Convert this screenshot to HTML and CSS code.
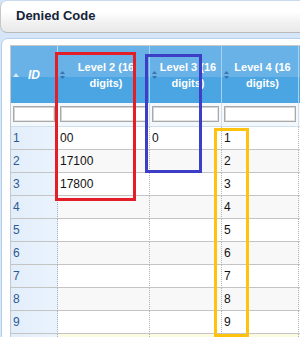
FILE: index.html
```html
<!DOCTYPE html>
<html>
<head>
<meta charset="utf-8">
<link rel="stylesheet" href="styles.css">
</head>
<body>
<div class="page">
  <div class="title-panel"><span class="title">Denied Code</span></div>
  <div class="grid-panel">
    <div class="grid">
      <div class="row head">
        <div class="cell hid"><svg class="asc" width="6" height="4" viewBox="0 0 6 4"><path d="M0 4 L3 0 L6 4 Z" fill="#d4e9f9"/></svg><span class="htext id-label">ID</span></div>
        <div class="cell h"><svg class="sort" width="5" height="8" viewBox="0 0 5 8"><path d="M0 3 L2.5 0 L5 3 Z M0 5 L2.5 8 L5 5 Z" fill="#3b72ad"/></svg><span class="htext">Level 2 (16 digits)</span></div>
        <div class="cell h"><svg class="sort" width="5" height="8" viewBox="0 0 5 8"><path d="M0 3 L2.5 0 L5 3 Z M0 5 L2.5 8 L5 5 Z" fill="#3b72ad"/></svg><span class="htext">Level 3 (16 digits)</span></div>
        <div class="cell h"><svg class="sort" width="5" height="8" viewBox="0 0 5 8"><path d="M0 3 L2.5 0 L5 3 Z M0 5 L2.5 8 L5 5 Z" fill="#3b72ad"/></svg><span class="htext">Level 4 (16 digits)</span></div>
        <div class="cell h"></div>
      </div>
      <div class="row filter">
        <div class="cell"><span class="inp"></span></div>
        <div class="cell"><span class="inp"></span></div>
        <div class="cell"><span class="inp"></span></div>
        <div class="cell"><span class="inp"></span></div>
        <div class="cell"><span class="inp"></span></div>
      </div>
      <div class="row data"><div class="cell idc">1</div><div class="cell">00</div><div class="cell">0</div><div class="cell">1</div><div class="cell"></div></div>
      <div class="row data alt"><div class="cell idc">2</div><div class="cell">17100</div><div class="cell"></div><div class="cell">2</div><div class="cell"></div></div>
      <div class="row data"><div class="cell idc">3</div><div class="cell">17800</div><div class="cell"></div><div class="cell">3</div><div class="cell"></div></div>
      <div class="row data alt"><div class="cell idc">4</div><div class="cell"></div><div class="cell"></div><div class="cell">4</div><div class="cell"></div></div>
      <div class="row data"><div class="cell idc">5</div><div class="cell"></div><div class="cell"></div><div class="cell">5</div><div class="cell"></div></div>
      <div class="row data alt"><div class="cell idc">6</div><div class="cell"></div><div class="cell"></div><div class="cell">6</div><div class="cell"></div></div>
      <div class="row data"><div class="cell idc">7</div><div class="cell"></div><div class="cell"></div><div class="cell">7</div><div class="cell"></div></div>
      <div class="row data alt"><div class="cell idc">8</div><div class="cell"></div><div class="cell"></div><div class="cell">8</div><div class="cell"></div></div>
      <div class="row data"><div class="cell idc">9</div><div class="cell"></div><div class="cell"></div><div class="cell">9</div><div class="cell"></div></div>
      <div class="row data sel"><div class="cell idc"></div><div class="cell"></div><div class="cell"></div><div class="cell"></div><div class="cell"></div></div>
    </div>
  </div>
  <div class="mark mark-red"></div>
  <div class="mark mark-blue"></div>
  <div class="mark mark-yellow"></div>
</div>
</body>
</html>
```
FILE: styles.css
```css
* { box-sizing: border-box; }
html, body {
  margin: 0;
  padding: 0;
  width: 300px;
  height: 337px;
  overflow: hidden;
  background: #d6e6f8;
  font-family: "Liberation Sans", Arial, sans-serif;
}
.page {
  position: relative;
  width: 300px;
  height: 337px;
  overflow: hidden;
}
.title-panel {
  width: 320px;
  height: 33px;
  border: 1px solid #c4c8cd;
  border-top-color: #c9daee;
  border-bottom-color: #b9b9b9;
  border-radius: 7px;
  background: linear-gradient(#ffffff 0%, #ffffff 35%, #f1f1f1 70%, #e9e9e9 100%);
  padding-left: 15px;
  display: flex;
  align-items: center;
}
.title {
  font-weight: bold;
  font-size: 13px;
  color: #14243a;
  position: relative;
  top: -1px;
}
.grid-panel {
  margin-top: 5px;
  margin-left: 1px;
  width: 330px;
  height: 320px;
  background: #fff;
  border: 1px solid #b5d0ec;
  border-radius: 7px;
  padding: 6px 0 0 8px;
}
.grid {
  border-top: 1px solid #c8c8c8;
  border-left: 1px solid #c8c8c8;
}
.row {
  display: grid;
  grid-template-columns: 47px 92px 72px 77px 60px;
}
.cell {
  border-right: 1px solid transparent;
}
.head .cell {
  height: 57px;
  background: linear-gradient(#69b2e7 0%, #69b2e7 54%, #4ba5e2 54%, #4ba5e2 100%);
  border-right-color: #a8d1f0;
  display: flex;
  align-items: center;
  color: #fff;
  font-weight: bold;
  font-size: 11px;
  line-height: 16px;
}
.head .cell.hid { border-right-color: #b9dbf3; }
.asc { margin-left: 2px; flex: none; }
.sort { margin-left: 2px; flex: none; }
.htext {
  flex: 1;
  text-align: center;
  padding: 0 2px 0 0;
}
.id-label {
  font-style: italic;
  font-size: 12px;
  padding-right: 8px;
}
.filter .cell {
  height: 24px;
  background: #f3f8fd;
  border-right-color: #d6dfe8;
  border-bottom: 1px solid #cfdeec;
  padding: 3px 2px 0 2px;
}
.inp {
  display: block;
  height: 16px;
  background: #fff;
  border: 1px solid #a9a9a9;
  box-shadow: inset 1px 1px 0 #d4d4d4, inset -1px -1px 0 #e4e4e4;
}
.data .cell {
  height: 23px;
  border-bottom: 1px solid #c4c4c4;
  border-right: 1px dotted #b3b3b3;
  font-size: 12px;
  line-height: 22px;
  padding-left: 2px;
  color: #111;
  background: #fff;
}
.data.alt .cell { background: #f8f8f8; }
.data.sel .cell { background: #fbfbe2; }
.data .cell.idc {
  background: linear-gradient(90deg, #e2eefb, #eaf3fd);
  color: #2d5a92;
  border-right: 1px dotted #a9b4c0;
}
.mark {
  position: absolute;
  border: 3px solid;
}
.mark-red {
  left: 55px;
  top: 52px;
  width: 81px;
  height: 149px;
  border-color: #e31e26;
}
.mark-blue {
  left: 145px;
  top: 54px;
  width: 57px;
  height: 119px;
  border-color: #3c3fc6;
}
.mark-yellow {
  left: 214px;
  top: 128px;
  width: 35px;
  height: 209px;
  border-color: #ffc30f;
}
```
